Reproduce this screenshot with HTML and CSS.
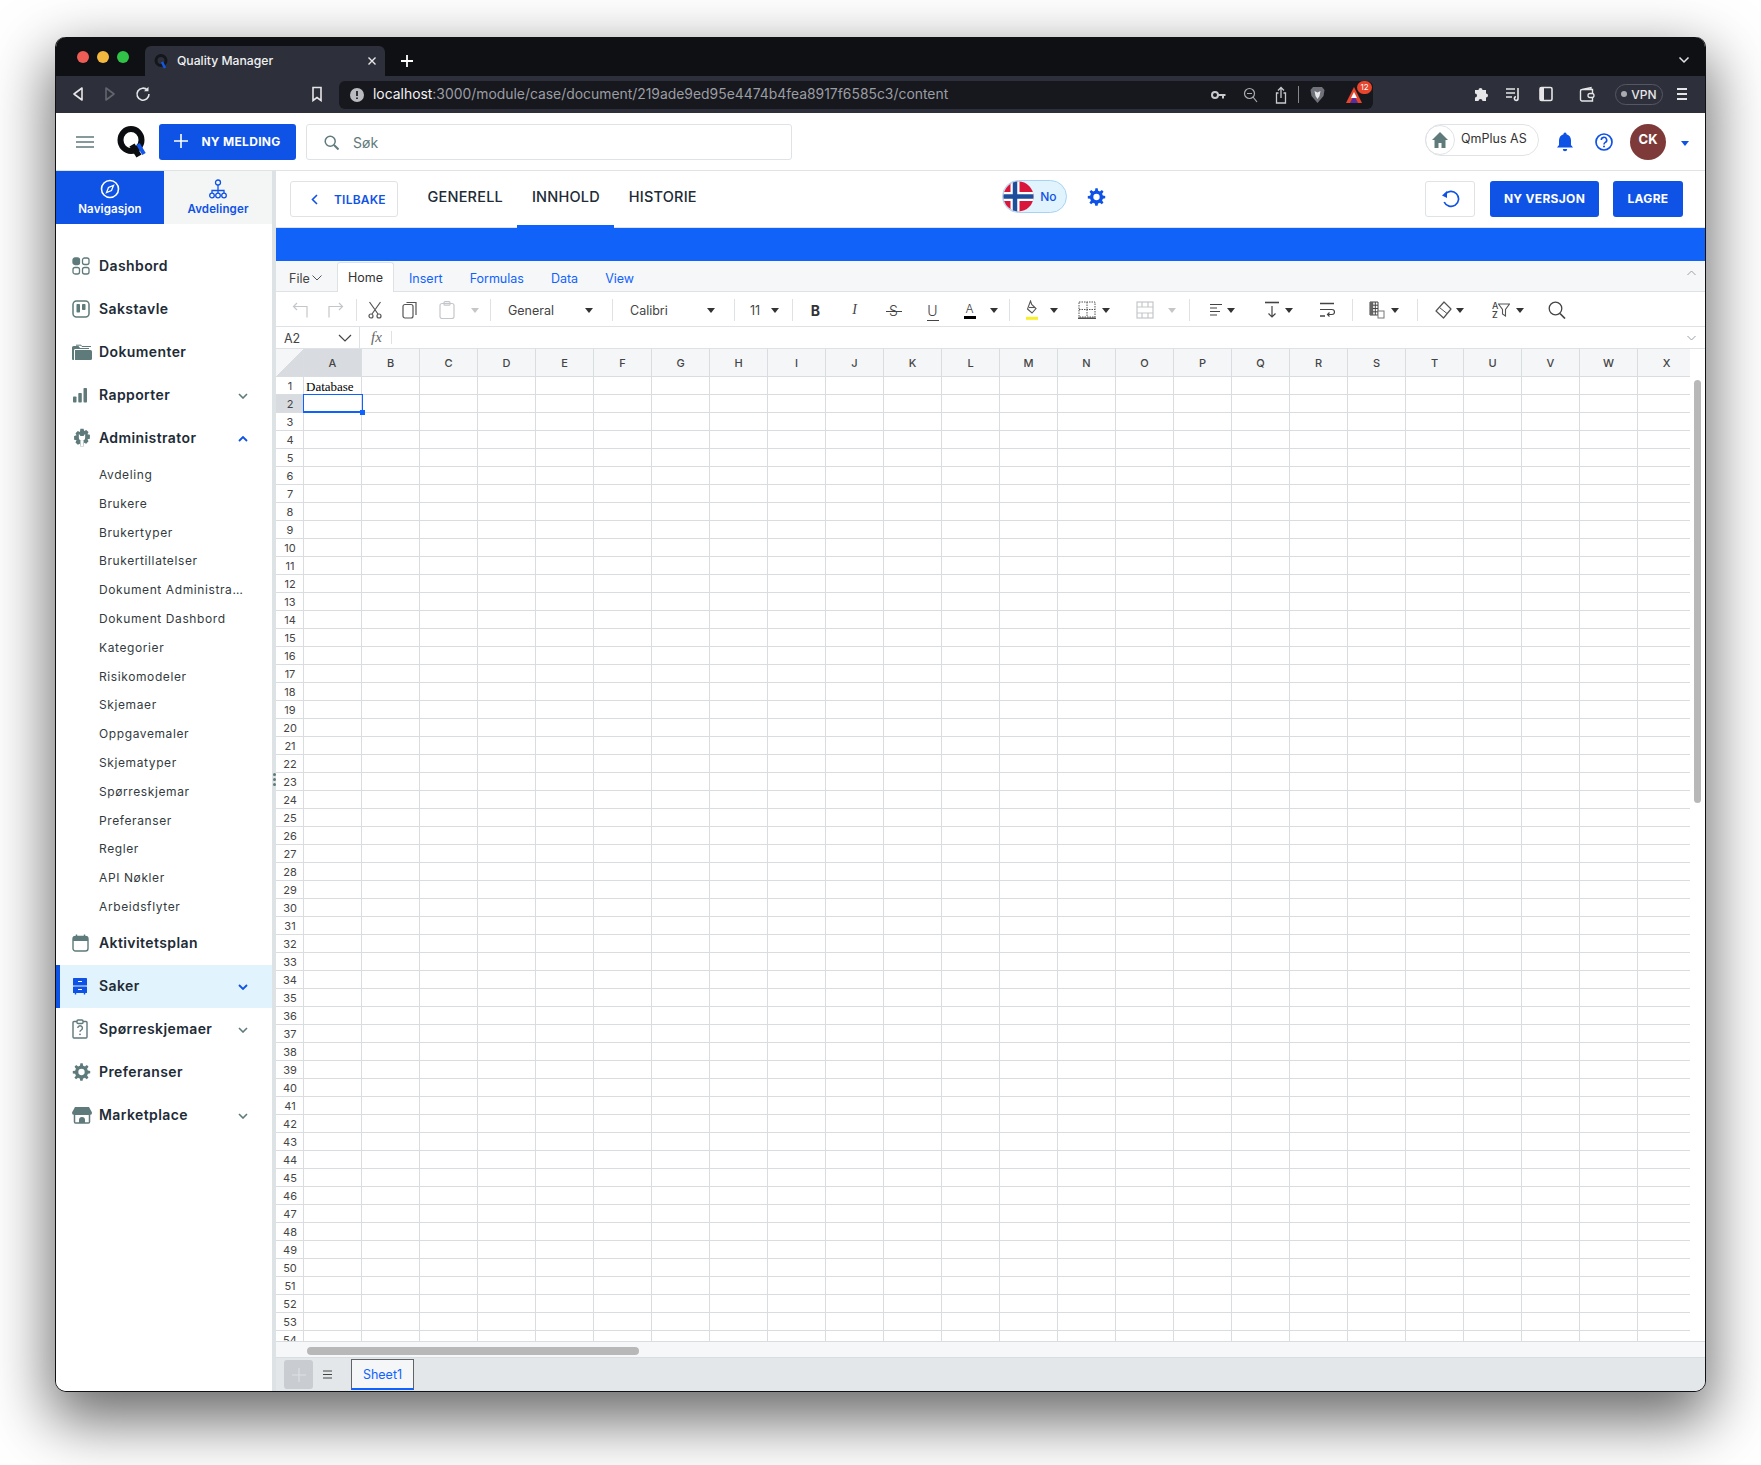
FILE: index.html
```html
<!DOCTYPE html>
<html>
	<head>
		<meta charset="utf-8">
		<title>Quality Manager</title>
		<link rel="stylesheet" href="styles.css">
	</head>
	<body>
		<div class="window">
			<!-- browser tabs -->
			<div class="tabStrip">
				<div class="lights"><span class="light red"></span><span class="light yellow"></span><span class="light green"></span></div>
				<div class="browserTab">
					<svg class="favicon" width="14" height="16" viewBox="0 0 14 16"><circle cx="7" cy="7.5" r="5" fill="none" stroke="#14161c" stroke-width="3"/><path d="M8 9l3 6" stroke="#1257e8" stroke-width="2.5"/></svg>
					<span class="browserTabTitle">Quality Manager</span>
					<svg class="browserTabClose" width="10" height="10" viewBox="0 0 10 10"><path d="M1.5 1.5l7 7M8.5 1.5l-7 7" stroke="#e8e8ea" stroke-width="1.4"/></svg>
				</div>
				<svg class="newTab" width="14" height="14" viewBox="0 0 14 14"><path d="M7 1v12M1 7h12" stroke="#fff" stroke-width="1.8"/></svg>
				<svg class="tabList" width="12" height="8" viewBox="0 0 12 8"><path d="M1.5 1.5L6 6l4.5-4.5" fill="none" stroke="#e4e4e6" stroke-width="1.5"/></svg>
			</div>
			<!-- browser toolbar -->
			<div class="urlRow">
				<div class="navIcons">
					<svg width="14" height="16" viewBox="0 0 14 16"><path d="M11 2L3 8l8 6z" fill="none" stroke="#e6e6e8" stroke-width="1.6" stroke-linejoin="round"/></svg>
					<svg width="14" height="16" viewBox="0 0 14 16"><path d="M3 2l8 6-8 6z" fill="none" stroke="#62656e" stroke-width="1.6" stroke-linejoin="round"/></svg>
					<svg width="16" height="16" viewBox="0 0 16 16"><path d="M12.5 4.2A6 6 0 1 0 14 8" fill="none" stroke="#e6e6e8" stroke-width="1.6"/><path d="M13.5 0.8v4.5H9z" fill="#e6e6e8"/></svg>
				</div>
				<svg class="bookmark" width="12" height="16" viewBox="0 0 12 16"><path d="M2 1.5h8v13L6 11.5l-4 3z" fill="none" stroke="#e6e6e8" stroke-width="1.6"/></svg>
				<div class="urlField">
					<svg width="14" height="14" viewBox="0 0 14 14"><circle cx="7" cy="7" r="7" fill="#b9bbc0"/><path d="M7 3v5M7 9.5v1.6" stroke="#202228" stroke-width="1.8"/></svg>
					<span class="urlText"><b>localhost</b>:3000/module/case/document/219ade9ed95e4474b4fea8917f6585c3/content</span>
					<div class="urlIcons">
						<svg width="15" height="10" viewBox="0 0 15 10"><circle cx="4" cy="5" r="3" fill="none" stroke="#c8c9cc" stroke-width="2"/><path d="M7 4h7.5v2H13v2.500h-2V6H7z" fill="#c8c9cc"/></svg>
						<svg width="15" height="16" viewBox="0 0 15 16"><circle cx="6.500" cy="6.500" r="5" fill="none" stroke="#a9abb0" stroke-width="1.200"/><path d="M4 6.500h5M10 10l4 5" stroke="#a9abb0" stroke-width="1.200"/></svg>
						<svg width="12" height="18" viewBox="0 0 12 18"><path d="M6 12V2M3 4.500L6 1.500l3 3M3.500 7H1.500v10h9V7h-2" fill="none" stroke="#c8c9cc" stroke-width="1.300"/></svg>
						<span class="urlSep"></span>
						<svg width="15" height="18" viewBox="0 0 15 18"><path d="M3 1h9l2.500 3-1 6-6 7-6-7-1-6z" fill="#70727a"/><path d="M4.500 5l3 1.500 3-1.500-1 5-2 3-2-3z" fill="#e8e8ea"/></svg>
						<span class="braveRewards">
							<svg width="18" height="18" viewBox="0 0 18 18"><path d="M9 1l8 16H1z" fill="#e8452c"/><path d="M5 17l4-8 4 8z" fill="#5a2d9c"/><path d="M9 6l3 6H6z" fill="#fff"/></svg>
							<span class="badge">12</span>
						</span>
					</div>
				</div>
				<div class="extIcons">
					<svg width="15" height="16" viewBox="0 0 15 16"><path d="M1 4h3.500a2 2 0 1 1 4 0H12v3.500a2 2 0 1 1 0 4V15H8.500a2 2 0 1 0-4 0H1v-3.500a2 2 0 1 0 0-4z" fill="#e6e6e8"/></svg>
					<svg width="16" height="16" viewBox="0 0 16 16"><path d="M1 3h9M1 7h9M1 11h6" stroke="#e6e6e8" stroke-width="1.600"/><path d="M13 2v10.500a1.800 1.800 0 1 1-2-1.700" fill="none" stroke="#e6e6e8" stroke-width="1.600"/></svg>
					<svg width="14" height="16" viewBox="0 0 14 16"><rect x="1" y="1.500" width="12" height="13" rx="1.500" fill="none" stroke="#e6e6e8" stroke-width="1.600"/><rect x="1" y="1.500" width="4" height="13" fill="#e6e6e8"/></svg>
					<svg width="16" height="16" viewBox="0 0 16 16"><path d="M3 3.500l9-2v2M1.500 5a1.500 1.500 0 0 1 1.500-1.500h10.500V15H3A1.500 1.500 0 0 1 1.500 13.500z" fill="none" stroke="#e6e6e8" stroke-width="1.400"/><rect x="9" y="7.500" width="6" height="4" rx="2" fill="#2d303a" stroke="#e6e6e8" stroke-width="1.300"/></svg>
					<span class="vpnPill"><i class="vpnDot"></i>VPN</span>
					<svg width="12" height="14" viewBox="0 0 12 14"><path d="M1 2h10M1 7h10M1 12h10" stroke="#e6e6e8" stroke-width="1.800"/></svg>
				</div>
			</div>
			<!-- app header -->
			<div class="appHeader">
				<svg class="burger" width="18" height="12" viewBox="0 0 18 12"><path d="M0 1h18M0 6h18M0 11h18" stroke="#5f7a7b" stroke-width="1.600"/></svg>
				<svg class="logo" width="30" height="32" viewBox="0 0 30 32"><ellipse cx="14" cy="14" rx="10.500" ry="11" fill="none" stroke="#0c0d10" stroke-width="6"/><path d="M15 19l7 11" stroke="#0c0d10" stroke-width="6"/><path d="M21 18l6 10" stroke="#1257e8" stroke-width="4"/></svg>
				<button class="btnPrimary newMessage">
					<svg width="14" height="14" viewBox="0 0 14 14"><path d="M7 0v14M0 7h14" stroke="#fff" stroke-width="1.600"/></svg>
					NY MELDING
				</button>
				<div class="search">
					<svg width="15" height="15" viewBox="0 0 15 15"><circle cx="6.200" cy="6.200" r="5" fill="none" stroke="#5f7a7b" stroke-width="1.500"/><path d="M10 10l4.500 4.500" stroke="#5f7a7b" stroke-width="2"/></svg>
					<span>Søk</span>
				</div>
				<div class="orgPill">
					<span class="orgHome"><svg width="18" height="18" viewBox="0 0 18 18"><path d="M9 1L1 9h2.500v8h4v-5h3v5h4V9H17z" fill="#5f7a7b"/></svg></span>
					<span class="orgName">QmPlus AS</span>
				</div>
				<svg class="bell" width="16" height="20" viewBox="0 0 16 20"><path d="M8 0.500a1.500 1.500 0 0 1 1.500 1.700C12.500 3 14 5.500 14 8.500V13l2 2.500H0L2 13V8.500C2 5.500 3.500 3 6.500 2.200A1.500 1.500 0 0 1 8 0.500zM5.800 17h4.400a2.200 2.200 0 0 1-4.400 0z" fill="#0f52e6"/></svg>
				<svg class="help" width="18" height="18" viewBox="0 0 18 18"><circle cx="9" cy="9" r="8" fill="none" stroke="#0f52e6" stroke-width="1.700"/><path d="M6.300 7a2.700 2.700 0 1 1 4 2.400c-.9.500-1.300 1-1.300 2" fill="none" stroke="#0f52e6" stroke-width="1.600"/><circle cx="9" cy="13.500" r="1" fill="#0f52e6"/></svg>
				<span class="avatar">CK</span>
				<span class="avatarCaret"></span>
			</div>
			<div class="appBody">
				<!-- left menu -->
				<div class="sidebar">
					<div class="sideTabs">
						<div class="sideTab sideTabOn">
							<svg width="20" height="20" viewBox="0 0 20 20"><circle cx="10" cy="10" r="8.500" fill="none" stroke="#fff" stroke-width="1.600"/><path d="M13.500 6.500L11.500 11.500 6.500 13.500 8.500 8.500z" fill="none" stroke="#fff" stroke-width="1.300"/></svg>
							Navigasjon
						</div>
						<div class="sideTab">
							<svg width="18" height="20" viewBox="0 0 18 20"><g fill="none" stroke="#0f52e6" stroke-width="1.300"><circle cx="9" cy="3.500" r="2.500"/><circle cx="3" cy="16.500" r="2.300"/><circle cx="9" cy="16.500" r="2.300"/><circle cx="15" cy="16.500" r="2.300"/><path d="M9 6v8M3 14v-2.500h12V14"/></g></svg>
							Avdelinger
						</div>
					</div>
					<div class="nav">
						<div class="navItem">
							<svg class="navIcon" width="18" height="18" viewBox="0 0 18 18"><rect x="1" y="1" width="6.500" height="6.500" rx="2" fill="#5f7a7b" stroke="#5f7a7b" stroke-width="1.300"/><g fill="none" stroke="#5f7a7b" stroke-width="1.300"><rect x="10.500" y="1" width="6.500" height="6.500" rx="2"/><rect x="1" y="10.500" width="6.500" height="6.500" rx="2"/><rect x="10.500" y="10.500" width="6.500" height="6.500" rx="2"/></g></svg>
							<span class="navLabel">Dashbord</span>
						</div>
						<div class="navItem">
							<svg class="navIcon" width="18" height="18" viewBox="0 0 18 18"><rect x="1" y="1" width="16" height="16" rx="3.500" fill="none" stroke="#5f7a7b" stroke-width="1.500"/><rect x="4.500" y="4" width="3.500" height="8.500" rx=".8" fill="#5f7a7b"/><rect x="10" y="4" width="3.500" height="6" rx=".8" fill="#5f7a7b"/></svg>
							<span class="navLabel">Sakstavle</span>
						</div>
						<div class="navItem">
							<svg class="navIcon" width="20" height="16" viewBox="0 0 20 16"><path d="M0 3.500A1.500 1.500 0 0 1 1.500 2h5L8 4h9v1H3a1.500 1.500 0 0 0-1 1.500v9.500H1a1 1 0 0 1-1-1z" fill="#5f7a7b"/><path d="M3 6h15.500a1.500 1.500 0 0 1 1.500 1.500v7a1.500 1.500 0 0 1-1.500 1.500H3z" fill="#5f7a7b"/><path d="M4 1.200h5l1 1.300h9" fill="none" stroke="#5f7a7b" stroke-width="1"/></svg>
							<span class="navLabel">Dokumenter</span>
						</div>
						<div class="navItem">
							<svg class="navIcon" width="16" height="16" viewBox="0 0 16 16"><rect x="1" y="9.500" width="3.500" height="6" rx=".8" fill="#5f7a7b"/><rect x="6.300" y="6" width="3.500" height="9.500" rx=".8" fill="#5f7a7b"/><rect x="11.500" y="1" width="3.500" height="14.500" rx=".8" fill="#5f7a7b"/></svg>
							<span class="navLabel">Rapporter</span>
							<svg class="chev" width="10" height="6" viewBox="0 0 10 6"><path d="M1 1l4 4 4-4" fill="none" stroke="#5f7a7b" stroke-width="1.600"/></svg>
						</div>
						<div class="navItem">
							<svg class="navIcon" width="20" height="19" viewBox="0 0 19 18"><path d="M8 0h3l.5 2.300 2-.9 2.200 2-1 2 2.300.6v3.600l-2.300.6 1 2-2.200 2.200-2-1L11 17H8l-.5-2.600-2 1-2.200-2.200 1-2L2 10.600V7l2.300-.6-1-2 2.200-2 2 .9z" fill="#5f7a7b"/><path d="M6.500 5v3.500a3 3 0 0 0 6 0V5L11 7H8zM8 11.500V17h3v-5.500z" fill="#fff"/></svg>
							<span class="navLabel">Administrator</span>
							<svg class="chev" width="10" height="6" viewBox="0 0 10 6"><path d="M1 5l4-4 4 4" fill="none" stroke="#0f52e6" stroke-width="1.800"/></svg>
						</div>
						<div class="subNav">
							<div class="subItem">Avdeling</div>
							<div class="subItem">Brukere</div>
							<div class="subItem">Brukertyper</div>
							<div class="subItem">Brukertillatelser</div>
							<div class="subItem">Dokument Administrasjon</div>
							<div class="subItem">Dokument Dashbord</div>
							<div class="subItem">Kategorier</div>
							<div class="subItem">Risikomodeler</div>
							<div class="subItem">Skjemaer</div>
							<div class="subItem">Oppgavemaler</div>
							<div class="subItem">Skjematyper</div>
							<div class="subItem">Spørreskjemar</div>
							<div class="subItem">Preferanser</div>
							<div class="subItem">Regler</div>
							<div class="subItem">API Nøkler</div>
							<div class="subItem">Arbeidsflyter</div>
						</div>
						<div class="navItem">
							<svg class="navIcon" width="17" height="18" viewBox="0 0 17 18"><rect x="1" y="2.500" width="15" height="14.500" rx="2.500" fill="none" stroke="#5f7a7b" stroke-width="1.400"/><path d="M1 4.500a2 2 0 0 1 2-2h11a2 2 0 0 1 2 2V7H1z" fill="#5f7a7b"/><path d="M4.500 0.500v3M12.500 0.500v3" stroke="#5f7a7b" stroke-width="1.400"/></svg>
							<span class="navLabel">Aktivitetsplan</span>
						</div>
						<div class="navItem navItemOn">
							<svg class="navIcon" width="16" height="18" viewBox="0 0 16 18"><rect x="1" y="1" width="14" height="7.500" rx=".6" fill="#0f52e6"/><rect x="1" y="9.500" width="14" height="6.500" rx=".6" fill="#0f52e6"/><path d="M6 4.500h4M6 12.500h4" stroke="#fff" stroke-width="1"/><path d="M3.500 16v1.500M12.500 16v1.500" stroke="#0f52e6" stroke-width="1.400"/></svg>
							<span class="navLabel">Saker</span>
							<svg class="chev" width="10" height="6" viewBox="0 0 10 6"><path d="M1 1l4 4 4-4" fill="none" stroke="#0f52e6" stroke-width="1.800"/></svg>
						</div>
						<div class="navItem">
							<svg class="navIcon" width="16" height="20" viewBox="0 0 16 20"><path d="M5 2.500H2A1 1 0 0 0 1 3.500v14.500a1 1 0 0 0 1 1h12a1 1 0 0 0 1-1V3.500a1 1 0 0 0-1-1h-3" fill="none" stroke="#5f7a7b" stroke-width="1.400"/><rect x="5" y="1" width="6" height="3.500" rx="1" fill="none" stroke="#5f7a7b" stroke-width="1.400"/><path d="M5.800 9a2.300 2.300 0 1 1 3.500 2c-.9.500-1.300 1-1.300 1.800" fill="none" stroke="#5f7a7b" stroke-width="1.400"/><circle cx="8" cy="15.300" r=".9" fill="#5f7a7b"/></svg>
							<span class="navLabel">Spørreskjemaer</span>
							<svg class="chev" width="10" height="6" viewBox="0 0 10 6"><path d="M1 1l4 4 4-4" fill="none" stroke="#5f7a7b" stroke-width="1.600"/></svg>
						</div>
						<div class="navItem">
							<svg class="navIcon" width="19" height="19" viewBox="0 0 24 24"><path fill-rule="evenodd" d="M13.500 1l.5 3a8.500 8.500 0 0 1 2.300 1l2.500-1.800 2.100 2.100L19 7.800a8.500 8.500 0 0 1 1 2.300l3 .5v3l-3 .5a8.500 8.500 0 0 1-1 2.300l1.800 2.500-2.100 2.100-2.500-1.800a8.500 8.500 0 0 1-2.300 1l-.5 3h-3l-.5-3a8.500 8.500 0 0 1-2.300-1l-2.500 1.800-2.100-2.100L5 16.600a8.500 8.500 0 0 1-1-2.300l-3-.5v-3l3-.5a8.500 8.500 0 0 1 1-2.300L3.200 5.400l2.100-2.100L7.800 5a8.500 8.500 0 0 1 2.300-1l.5-3zM12 8a4 4 0 1 0 0 8 4 4 0 0 0 0-8z" fill="#5f7a7b"/></svg>
							<span class="navLabel">Preferanser</span>
						</div>
						<div class="navItem">
							<svg class="navIcon" width="20" height="18" viewBox="0 0 20 18"><path d="M3 1h14l3 5.500a2.500 2.500 0 0 1-2.500 2.500H2.500A2.500 2.500 0 0 1 0 6.500z" fill="#5f7a7b"/><path d="M2.500 9v7a1 1 0 0 0 1 1h13a1 1 0 0 0 1-1V9" fill="none" stroke="#5f7a7b" stroke-width="1.500"/><path d="M7 17v-3a3 3 0 0 1 6 0v3z" fill="#5f7a7b"/></svg>
							<span class="navLabel">Marketplace</span>
							<svg class="chev" width="10" height="6" viewBox="0 0 10 6"><path d="M1 1l4 4 4-4" fill="none" stroke="#5f7a7b" stroke-width="1.600"/></svg>
						</div>
					</div>
				</div>
				<div class="divider"><span class="grip"><i></i><i></i><i></i></span></div>
				<!-- document -->
				<div class="main">
					<div class="pageTabs">
						<button class="btnBack">
							<svg width="7" height="11" viewBox="0 0 7 11"><path d="M6 1L1.500 5.500 6 10" fill="none" stroke="#0f52e6" stroke-width="1.600"/></svg>
							TILBAKE
						</button>
						<div class="pageTab">GENERELL</div>
						<div class="pageTab pageTabOn">INNHOLD</div>
						<div class="pageTab">HISTORIE</div>
						<div class="langArea">
							<div class="langPill">
								<svg width="31" height="31" viewBox="0 0 31 31"><defs><clipPath id="flagClip"><circle cx="15.500" cy="15.500" r="15"/></clipPath></defs><g clip-path="url(#flagClip)"><rect width="31" height="31" fill="#d9173d"/><path d="M12 0v31M0 15.500h31" stroke="#fff" stroke-width="9"/><path d="M12 0v31M0 15.500h31" stroke="#1c4e9c" stroke-width="4.500"/></g></svg>
								<span>No</span>
							</div>
							<svg class="langGear" width="19" height="20" viewBox="0 0 24 24"><path fill-rule="evenodd" d="M13.500 1l.5 3a8.500 8.500 0 0 1 2.300 1l2.500-1.800 2.100 2.100L19 7.800a8.500 8.500 0 0 1 1 2.300l3 .5v3l-3 .5a8.500 8.500 0 0 1-1 2.300l1.800 2.500-2.100 2.100-2.500-1.800a8.500 8.500 0 0 1-2.300 1l-.5 3h-3l-.5-3a8.500 8.500 0 0 1-2.300-1l-2.500 1.800-2.100-2.100L5 16.600a8.500 8.500 0 0 1-1-2.300l-3-.5v-3l3-.5a8.500 8.500 0 0 1 1-2.300L3.200 5.400l2.100-2.100L7.800 5a8.500 8.500 0 0 1 2.300-1l.5-3zM12 8a4 4 0 1 0 0 8 4 4 0 0 0 0-8z" fill="#0f52e6"/></svg>
						</div>
						<div class="pageActions">
							<button class="btnIcon"><svg width="20" height="18" viewBox="0 0 20 18"><path d="M5 4.500A7.500 7.500 0 1 1 4.200 12" fill="none" stroke="#0f52e6" stroke-width="1.700"/><path d="M2 5.500L7 1v7z" fill="#0f52e6"/></svg></button>
							<button class="btnPrimary btnVersion">NY VERSJON</button>
							<button class="btnPrimary btnSave">LAGRE</button>
						</div>
					</div>
					<div class="blueBar"></div>
					<div class="ribbonTabs">
						<span class="fileMenu">File<svg width="10" height="6" viewBox="0 0 10 6"><path d="M.5.500L5 5 9.500.500" fill="none" stroke="#555" stroke-width="1"/></svg></span>
						<span class="ribbonTab ribbonTabOn">Home</span>
						<span class="ribbonTab">Insert</span>
						<span class="ribbonTab">Formulas</span>
						<span class="ribbonTab">Data</span>
						<span class="ribbonTab">View</span>
						<svg class="ribbonCollapse" width="9" height="6" viewBox="0 0 9 6"><path d="M.5 5L4.500 1l4 4" fill="none" stroke="#9aa0a6" stroke-width="1"/></svg>
					</div>
					<div class="toolbar">
						<div class="toolGroup tg1">
							<svg class="tool" width="18" height="18" viewBox="0 0 18 18"><path d="M5 2L1.500 5.500 5 9M1.500 5.500H15v11" fill="none" stroke="#c4c7ca" stroke-width="1.200"/></svg>
							<svg class="tool ml16" width="18" height="18" viewBox="0 0 18 18"><path d="M13 2l3.500 3.500L13 9M16.500 5.500H3v11" fill="none" stroke="#c4c7ca" stroke-width="1.200"/></svg>
						</div>
						<div class="toolGroup tg2">
							<svg class="tool" width="14" height="18" viewBox="0 0 14 18"><g fill="none" stroke="#555" stroke-width="1.200"><path d="M1.500 1L10 13M12.500 1L4 13"/><circle cx="3" cy="15" r="2"/><circle cx="11" cy="15" r="2"/></g></svg>
							<svg class="tool ml20" width="15" height="18" viewBox="0 0 15 18"><g fill="none" stroke="#555" stroke-width="1.200"><rect x="1" y="3.500" width="10" height="13.500" rx="2"/><path d="M4.500 1.500H14v12.500"/></g></svg>
							<svg class="tool ml22" width="16" height="18" viewBox="0 0 16 18"><g fill="none" stroke="#c4c7ca" stroke-width="1.200"><rect x="1" y="2.500" width="14" height="15" rx="2"/><rect x="5" y=".7" width="6" height="3.500" rx="1"/></g></svg>
							<i class="caret caretOff ml16"></i>
						</div>
						<div class="toolGroup tg3"><span class="toolText">General</span><i class="caret"></i></div>
						<div class="toolGroup tg3"><span class="toolText">Calibri</span><i class="caret"></i></div>
						<div class="toolGroup tg4"><span class="toolText">11</span><i class="caret"></i></div>
						<div class="toolGroup tg5">
							<span class="fmt fmtBold">B</span>
							<span class="fmt fmtItalic">I</span>
							<span class="fmt fmtStrike">S</span>
							<span class="fmt fmtUnder">U</span>
							<span class="fmt fmtColor">A</span>
							<i class="caret ml14"></i>
						</div>
						<div class="toolGroup tg6">
							<svg class="tool" width="16" height="20" viewBox="0 0 16 20"><g fill="none" stroke="#555" stroke-width="1.100"><path d="M6.500 1l1.200 3.500L12 8.500 8 13 3.500 9z"/><path d="M5 7.500h6"/></g><rect x="2" y="16.800" width="12" height="3" fill="#f8ef2a"/></svg>
							<i class="caret ml10"></i>
							<svg class="tool ml20" width="18" height="18" viewBox="0 0 18 18"><path d="M1 1h16v15H1zM9 1v15M1 8.500h16" fill="none" stroke="#555" stroke-width="1" stroke-dasharray="1.500 1"/><path d="M0 17.200h18" stroke="#333" stroke-width="1.300"/></svg>
							<i class="caret ml6"></i>
							<svg class="tool ml26" width="18" height="18" viewBox="0 0 18 18"><g fill="none" stroke="#c4c7ca" stroke-width="1.200"><rect x="1" y="1" width="16" height="16"/><path d="M1 6h16M1 12h16M6 1v5M12 1v5M6 12v5M12 12v5"/></g></svg>
							<i class="caret caretOff ml14"></i>
						</div>
						<div class="toolGroup tg7">
							<svg class="tool" width="14" height="14" viewBox="0 0 14 14"><path d="M1 1.500h12M1 5h7M1 8.500h10M1 12h7" stroke="#444" stroke-width="1.200"/></svg>
							<i class="caret ml4"></i>
							<svg class="tool ml30" width="14" height="18" viewBox="0 0 14 18"><path d="M0 1.500h14" stroke="#444" stroke-width="1.600"/><path d="M7 5v11M3.500 12.500L7 16l3.500-3.500" fill="none" stroke="#444" stroke-width="1.200"/></svg>
							<i class="caret ml6"></i>
							<svg class="tool ml26" width="16" height="16" viewBox="0 0 16 16"><path d="M1 1.500h14M1 14h5" stroke="#444" stroke-width="1.400"/><path d="M1 7.500h12a2.500 2.500 0 0 1 0 5H8.500M10.500 10.500l-2 2 2 2" fill="none" stroke="#444" stroke-width="1.200"/></svg>
						</div>
						<div class="toolGroup tg8">
							<svg class="tool" width="16" height="18" viewBox="0 0 16 18"><path d="M1 1h8v13H1zM1 4.200h8M1 7.500h8M1 10.800h8M3.700 1v13M6.300 1v13" fill="none" stroke="#444" stroke-width="1"/><rect x="1" y="1" width="2.700" height="13" fill="#666"/><rect x="9" y="10" width="6" height="7" fill="#fff" stroke="#777" stroke-width="1"/></svg>
							<i class="caret ml6"></i>
						</div>
						<div class="toolGroup tg9">
							<svg class="tool" width="17" height="18" viewBox="0 0 17 18"><path d="M9 1l7 7-7.500 9L1 10z" fill="none" stroke="#555" stroke-width="1.200" stroke-linejoin="round"/><path d="M4.500 6.500l7.500 6" stroke="#555" stroke-width="1"/></svg>
							<i class="caret ml4"></i>
							<span class="sortIcon ml28">
								<span class="sortAz">A<br>Z</span>
								<svg width="12" height="14" viewBox="0 0 12 14"><path d="M.5 1h11L7.500 6.500V13l-3-2V6.500z" fill="none" stroke="#555" stroke-width="1.100"/></svg>
							</span>
							<i class="caret ml6"></i>
							<svg class="tool ml24" width="18" height="18" viewBox="0 0 18 18"><circle cx="7.500" cy="7.500" r="6.300" fill="none" stroke="#444" stroke-width="1.300"/><path d="M12 12.500l5 5" stroke="#444" stroke-width="1.700"/></svg>
						</div>
					</div>
					<div class="formulaBar">
						<div class="nameBox">
							<span>A2</span>
							<svg width="14" height="8" viewBox="0 0 14 8"><path d="M1 1l6 6 6-6" fill="none" stroke="#444" stroke-width="1.200"/></svg>
						</div>
						<span class="fx">fx</span>
						<span class="fxSep"></span>
						<svg class="formulaExpand" width="9" height="6" viewBox="0 0 9 6"><path d="M.5 1l4 4 4-4" fill="none" stroke="#9aa0a6" stroke-width="1"/></svg>
					</div>
					<div class="sheet">
						<div class="sheetClip">
							<div class="colRow">
								<div class="corner"></div>
								<div class="colHead colHeadOn">A</div><div class="colHead">B</div><div class="colHead">C</div><div class="colHead">D</div><div class="colHead">E</div><div class="colHead">F</div><div class="colHead">G</div><div class="colHead">H</div><div class="colHead">I</div><div class="colHead">J</div><div class="colHead">K</div><div class="colHead">L</div><div class="colHead">M</div><div class="colHead">N</div><div class="colHead">O</div><div class="colHead">P</div><div class="colHead">Q</div><div class="colHead">R</div><div class="colHead">S</div><div class="colHead">T</div><div class="colHead">U</div><div class="colHead">V</div><div class="colHead">W</div><div class="colHead">X</div>
							</div>
							<div class="gridRow">
								<div class="rowHeads">
									<div class="rowHead">1</div><div class="rowHead rowHeadOn">2</div><div class="rowHead">3</div><div class="rowHead">4</div><div class="rowHead">5</div><div class="rowHead">6</div><div class="rowHead">7</div><div class="rowHead">8</div><div class="rowHead">9</div><div class="rowHead">10</div>
									<div class="rowHead">11</div><div class="rowHead">12</div><div class="rowHead">13</div><div class="rowHead">14</div><div class="rowHead">15</div><div class="rowHead">16</div><div class="rowHead">17</div><div class="rowHead">18</div><div class="rowHead">19</div><div class="rowHead">20</div>
									<div class="rowHead">21</div><div class="rowHead">22</div><div class="rowHead">23</div><div class="rowHead">24</div><div class="rowHead">25</div><div class="rowHead">26</div><div class="rowHead">27</div><div class="rowHead">28</div><div class="rowHead">29</div><div class="rowHead">30</div>
									<div class="rowHead">31</div><div class="rowHead">32</div><div class="rowHead">33</div><div class="rowHead">34</div><div class="rowHead">35</div><div class="rowHead">36</div><div class="rowHead">37</div><div class="rowHead">38</div><div class="rowHead">39</div><div class="rowHead">40</div>
									<div class="rowHead">41</div><div class="rowHead">42</div><div class="rowHead">43</div><div class="rowHead">44</div><div class="rowHead">45</div><div class="rowHead">46</div><div class="rowHead">47</div><div class="rowHead">48</div><div class="rowHead">49</div><div class="rowHead">50</div>
									<div class="rowHead">51</div><div class="rowHead">52</div><div class="rowHead">53</div><div class="rowHead">54</div>
								</div>
								<div class="cells">
									<div class="cell">Database</div>
									<div class="cellSelected"><i class="fillHandle"></i></div>
								</div>
							</div>
						</div>
						<div class="vScroll"></div>
					</div>
					<div class="hScrollRow"><div class="hThumb"></div></div>
					<div class="sheetTabs">
						<span class="addSheet"><svg width="14" height="14" viewBox="0 0 14 14"><path d="M7 0v14M0 7h14" stroke="#dde0e3" stroke-width="1.200"/></svg></span>
						<svg class="sheetMenu" width="9" height="9" viewBox="0 0 9 9"><path d="M0 1h9M0 4.500h9M0 8h9" stroke="#444" stroke-width="1"/></svg>
						<span class="sheetTab">Sheet1</span>
					</div>
				</div>
			</div>
		</div>
	</body>
</html>
```

FILE: styles.css
```css
html, body { margin: 0; padding: 0; background: #fff; }
body { width: 1761px; height: 1465px; overflow: hidden; font-family: "Inter", "Liberation Sans", sans-serif; color: #212b36; }
svg { display: block; flex: none; }
button { font-family: inherit; cursor: pointer; }

.window { width: 1649px; height: 1354px; margin: 37px 0 0 56px; border-radius: 10px; overflow: hidden; display: flex; flex-direction: column; background: #fff; box-shadow: 1px 0 #101114, -1px 0 #101114, 0 1px #101114, 0 24px 60px 6px rgba(0,0,0,.58); }

/* browser chrome */
.tabStrip { height: 39px; flex: none; background: #0f1014; display: flex; align-items: flex-end; position: relative; }
.lights { display: flex; gap: 8px; width: 89px; padding: 0 0 13px 21px; box-sizing: border-box; align-self: flex-end; }
.light { width: 12px; height: 12px; border-radius: 50%; }
.red { background: #ed5c55; }
.yellow { background: #f4b83f; }
.green { background: #30c348; }
.browserTab { width: 240px; height: 30px; background: #2d303a; border-radius: 6px 6px 0 0; display: flex; align-items: center; padding: 0 8px 0 9px; box-sizing: border-box; }
.browserTabTitle { margin-left: 9px; padding-bottom: 2px; font-size: 12.200px; font-weight: 500; color: #f0f0f2; flex: 1; }
.newTab { margin: 0 0 8px 15px; }
.tabList { margin: 0 0 12px auto; margin-right: 15px; }

.urlRow { height: 37px; flex: none; background: #2d303a; display: flex; align-items: center; padding-bottom: 1px; box-sizing: border-box; }
.navIcons { display: flex; align-items: center; gap: 18px; margin-left: 15px; width: 240px; }
.bookmark { margin-left: 0; }
.urlField { width: 1034px; height: 28px; margin-left: 16px; margin-top: 1px; background: #17181d; border-radius: 6px; display: flex; align-items: center; padding-left: 11px; box-sizing: border-box; }
.urlText { margin-left: 9px; padding-bottom: 2px; font-size: 13.900px; color: #9b9da4; white-space: nowrap; }
.urlText b { font-weight: 400; color: #f2f2f4; }
.urlIcons { display: flex; align-items: center; margin-left: auto; gap: 17px; padding-right: 10px; }
.urlSep { width: 1px; height: 17px; background: #85878d; margin: 0 -6px 0 -6px; }
.braveRewards { position: relative; display: block; margin-left: 3px; }
.badge { position: absolute; right: -9px; top: -5px; min-width: 13px; height: 13px; padding: 0 1px; background: #e8452c; border-radius: 7px; color: #fff; font-size: 8px; line-height: 13px; text-align: center; }
.extIcons { display: flex; align-items: center; margin-left: 101px; gap: 0; }
.extIcons svg:nth-child(2) { margin-left: 16px; }
.extIcons svg:nth-child(3) { margin-left: 18px; }
.extIcons svg:nth-child(4) { margin-left: 26px; }
.extIcons svg:nth-child(6) { margin-left: 13px; }
.vpnPill { margin-left: 20px; width: 48px; height: 21px; border: 1px solid #555862; border-radius: 11px; box-sizing: border-box; display: flex; align-items: center; justify-content: center; gap: 4px; font-size: 12px; font-weight: 500; color: #e6e6e8; }
.vpnDot { width: 6px; height: 6px; border-radius: 50%; background: #a9abb0; }

/* app header */
.appHeader { height: 58px; flex: none; box-sizing: border-box; border-bottom: 1px solid #dfe3e6; display: flex; align-items: center; padding-top: 1px; }
.burger { margin-left: 20px; }
.logo { margin-left: 23px; }
.btnPrimary { background: #0f52e6; color: #fff; border: 0; border-radius: 3px; font-weight: 700; font-size: 12px; letter-spacing: .3px; display: flex; align-items: center; justify-content: center; height: 36px; padding: 0 0 2px; }
.newMessage { width: 137px; margin-left: 12px; gap: 13px; }
.search { width: 486px; height: 36px; margin-left: 10px; border: 1px solid #dfe3e6; border-radius: 3px; box-sizing: border-box; display: flex; align-items: center; padding-left: 17px; gap: 14px; font-size: 14px; color: #5f7a7b; }
.orgPill { margin-left: auto; width: 114px; height: 32px; margin-top: -4px; border: 1px solid #dfe3e6; border-radius: 16px; box-sizing: border-box; display: flex; align-items: center; font-size: 12.500px; color: #333; }
.orgHome { width: 30px; height: 30px; border: 1px solid #dfe3e6; border-radius: 50%; box-sizing: border-box; display: flex; align-items: center; justify-content: center; margin-left: -1px; }
.orgName { margin-left: 6px; margin-top: -3px; }
.bell { margin-left: 18px; }
.help { margin-left: 22px; }
.avatar { margin-left: 17px; width: 36px; height: 36px; border-radius: 50%; background: #7d3a38; color: #fff; font-size: 13px; font-weight: 700; display: flex; align-items: center; justify-content: center; padding-bottom: 6px; box-sizing: border-box; }
.avatarCaret { margin: 2px 16px 0 15px; width: 0; height: 0; border-left: 4.5px solid transparent; border-right: 4.5px solid transparent; border-top: 5px solid #0f52e6; }

.appBody { flex: 1; display: flex; min-height: 0; }

/* left menu */
.sidebar { width: 216px; flex: none; background: #fff; }
.sideTabs { display: flex; height: 53px; background: #f4f6f6; }
.sideTab { width: 108px; display: flex; flex-direction: column; align-items: center; gap: 3px; padding-top: 8px; box-sizing: border-box; font-size: 11.500px; font-weight: 600; letter-spacing: .15px; color: #0f52e6; }
.sideTabOn { background: #0f52e6; color: #fff; }
.nav { padding-top: 20px; }
.navItem { height: 43px; display: flex; align-items: center; position: relative; box-sizing: border-box; }
.navIcon { position: absolute; left: 16px; top: 50%; transform: translateY(-50%); }
.navLabel { margin-left: 43px; font-size: 14px; font-weight: 600; letter-spacing: .4px; color: #212b36; margin-top: -1px; }
.chev { margin-left: auto; margin-right: 24px; margin-top: 2px; }
.navItemOn { background: #e1f3fc; border-left: 4px solid #0f52e6; }
.navItemOn .navIcon { left: 12px; }
.navItemOn .navLabel { margin-left: 39px; }
.subNav { margin-top: 2px; }
.subItem { height: 28.800px; line-height: 28px; padding-left: 43px; width: 187px; box-sizing: border-box; font-size: 12px; letter-spacing: .6px; color: #333a40; white-space: nowrap; overflow: hidden; text-overflow: ellipsis; }

.divider { width: 4px; flex: none; background: #dde3e4; display: flex; align-items: center; justify-content: center; padding-bottom: 4px; box-sizing: border-box; }
.grip { display: flex; flex-direction: column; gap: 2px; margin-top: 0; }
.grip i { display: block; width: 3px; height: 3px; border-radius: 50%; background: #5f7a7b; }

/* document */
.main { flex: 1; min-width: 0; display: flex; flex-direction: column; }
.pageTabs { height: 57px; flex: none; box-sizing: border-box; display: flex; align-items: flex-start; border-bottom: 1px solid #dfe3e6; }
.btnBack { margin: 10px 0 0 14px; width: 108px; height: 36px; background: #fff; border: 1px solid #dfe3e6; border-radius: 3px; display: flex; align-items: center; padding: 0 0 0 20px; gap: 16px; color: #0f52e6; font-size: 12px; font-weight: 600; letter-spacing: .2px; }
.pageTab { height: 57px; padding: 17px 14.500px 0; box-sizing: border-box; font-size: 14.500px; font-weight: 500; letter-spacing: .2px; color: #212b36; }
.btnBack + .pageTab { margin-left: 15px; }
.pageTabOn { border-bottom: 3px solid #0f62fe; }
.langArea { display: flex; align-items: center; margin: 9px 0 0 291px; }
.langPill { width: 65px; height: 33px; background: #e1f3fc; border: 1px solid #a6d3f5; border-radius: 17px; box-sizing: border-box; display: flex; align-items: center; gap: 6px; font-size: 12px; font-weight: 500; color: #0f52e6; }
.langGear { margin-left: 20px; }
.pageActions { margin: 10px 22px 0 auto; display: flex; gap: 15px; }
.btnIcon { width: 50px; height: 36px; background: #fff; border: 1px solid #dfe3e6; border-radius: 3px; display: flex; align-items: center; justify-content: center; padding: 0; }
.btnVersion { width: 109px; }
.btnSave { width: 70px; margin-left: -1px; }
.blueBar { height: 33px; flex: none; background: #1062f8; }

/* spreadsheet */
.ribbonTabs { height: 31px; flex: none; box-sizing: border-box; background: #f6f7f9; border-bottom: 1px solid #dfe2e5; display: flex; align-items: flex-end; position: relative; font-size: 12.500px; }
.fileMenu { margin-left: 13px; height: 30px; padding-top: 4px; box-sizing: border-box; display: flex; align-items: center; gap: 2px; color: #444; width: 48px; }
.ribbonTab { height: 30px; padding-top: 4px; box-sizing: border-box; display: flex; align-items: center; color: #0f62fe; margin-right: 27px; }
.ribbonTabOn { width: 57px; height: 30px; margin-bottom: -1px; justify-content: center; background: #fff; border: 1px solid #dfe2e5; border-bottom: 0; border-radius: 3px 3px 0 0; color: #333; margin-right: 15px; padding-top: 0; padding-bottom: 1px; }
.ribbonCollapse { position: absolute; right: 9px; top: 9px; }
.toolbar { height: 35px; flex: none; box-sizing: border-box; border-bottom: 1px solid #dfe2e5; padding-top: 2px; display: flex; align-items: center; font-size: 12.500px; color: #444; }
.toolGroup { height: 22px; display: flex; align-items: center; box-sizing: border-box; border-right: 1px solid #dfe2e5; flex: none; }
.tg1 { width: 81px; padding-left: 16px; }
.tg2 { width: 134px; padding-left: 11px; }
.tg3 { width: 122px; padding-left: 17px; }
.tg3 .caret { margin-left: auto; margin-right: 19px; }
.tg4 { width: 58px; padding-left: 15px; }
.tg4 .caret { margin-left: 11px; }
.tg5 { width: 217px; padding-left: 13.500px; }
.tg6 { width: 180px; padding-left: 14px; }
.tg7 { width: 163px; padding-left: 19px; }
.tg8 { width: 65px; padding-left: 16px; }
.tg9 { border-right: 0; padding-left: 17px; }
.ml4 { margin-left: 4px; }
.ml6 { margin-left: 6px; }
.ml10 { margin-left: 10px; }
.ml14 { margin-left: 14px; }
.ml16 { margin-left: 16px; }
.ml20 { margin-left: 20px; }
.ml22 { margin-left: 22px; }
.ml24 { margin-left: 24px; }
.ml26 { margin-left: 26px; }
.ml28 { margin-left: 28px; }
.ml30 { margin-left: 30px; }
.caret { display: block; flex: none; width: 0; height: 0; border-left: 4px solid transparent; border-right: 4px solid transparent; border-top: 5px solid #333; }
.caretOff { border-top-color: #c4c7ca; }
.fmt { display: block; width: 18px; margin-right: 21px; text-align: center; font-size: 14px; color: #444; flex: none; position: relative; }
.fmtBold { font-weight: 700; color: #333; }
.fmtItalic { font-family: "Liberation Serif", serif; font-style: italic; }
.fmtStrike { font-weight: 300; }
.fmtStrike:after { content: ""; position: absolute; left: 1px; right: 1px; top: 9px; height: 1px; background: #444; }
.fmtUnder { font-weight: 300; }
.fmtUnder:after { content: ""; position: absolute; left: 3px; right: 3px; bottom: -2px; height: 1px; background: #444; }
.fmtColor { border-bottom: 3px solid #000; line-height: 15px; font-size: 12px; font-weight: 300; margin-right: 0; width: 12px; margin-left: 1px; }
.sortIcon { display: flex; align-items: center; gap: 0; }
.sortAz { font-size: 9px; line-height: 9px; color: #444; font-weight: 500; }
.formulaBar { height: 22px; flex: none; box-sizing: border-box; border-bottom: 1px solid #dfe2e5; display: flex; align-items: center; position: relative; font-size: 12.500px; color: #444; }
.nameBox { width: 84px; height: 21px; box-sizing: border-box; border-right: 1px solid #dfe2e5; display: flex; align-items: center; justify-content: space-between; padding: 1px 7px 0 8px; }
.fx { font-family: "Liberation Serif", serif; font-style: italic; font-size: 15px; margin-left: 11px; color: #666; }
.fxSep { width: 1px; height: 13px; background: #dfe2e5; margin-left: 9px; }
.formulaExpand { position: absolute; right: 9px; top: 8px; }

.sheet { flex: 1; min-height: 0; position: relative; }
.sheetClip { width: 1414px; height: 100%; overflow: hidden; display: flex; flex-direction: column; }
.colRow { display: flex; height: 28px; flex: none; background: #f5f6f8; }
.corner { width: 28px; flex: none; box-sizing: border-box; border-right: 1px solid #dadde0; border-bottom: 1px solid #dadde0; background: linear-gradient(to bottom right, #f5f6f8 50%, #d8dce0 50%); }
.colHead { width: 58px; flex: none; box-sizing: border-box; border-right: 1px solid #dadde0; border-bottom: 1px solid #dadde0; display: flex; align-items: center; justify-content: center; font-size: 11px; font-weight: 500; color: #444; }
.colHeadOn { background: #d8dce0; }
.gridRow { display: flex; flex: 1; min-height: 0; }
.rowHeads { width: 28px; flex: none; }
.rowHead { height: 18px; box-sizing: border-box; border-right: 1px solid #dadde0; border-bottom: 1px solid #dadde0; background: #fff; text-align: center; font-size: 11px; line-height: 19px; color: #444; padding-left: 1px; }
.rowHeadOn { background: #d8dce0; }
.cells { flex: none; width: 1392px; height: 972px; display: grid; grid-template-columns: repeat(24, 58px); grid-auto-rows: 18px; background-image: linear-gradient(to right, transparent 57px, #dadde0 57px), linear-gradient(to bottom, transparent 17px, #dadde0 17px); background-size: 58px 18px; }
.cell { font-family: "Liberation Serif", serif; font-size: 13px; line-height: 19px; color: #000; padding-left: 2px; white-space: nowrap; }
.cellSelected { position: relative; margin: -1px -1px 0 -1px; border: 1px solid #0f62fe; grid-column: 1; grid-row: 2; }
.cellSelected { border-width: 1px 1px 2px 1px; }
.fillHandle { position: absolute; right: -3px; bottom: -4px; width: 5px; height: 5px; background: #0f62fe; }
.vScroll { position: absolute; right: 4px; top: 31px; width: 7px; height: 423px; background: #b8b8b8; border-radius: 4px; }
.hScrollRow { height: 17px; flex: none; box-sizing: border-box; background: #f6f7f9; border-top: 1px solid #dadde0; border-bottom: 1px solid #dadde0; padding: 5px 0 0 31px; }
.hThumb { width: 332px; height: 8px; background: #b8b8b8; border-radius: 4px; }
.sheetTabs { height: 33px; flex: none; background: #e4e7ea; display: flex; align-items: flex-start; }
.addSheet { margin: 2px 0 0 8px; width: 29px; height: 29px; background: #c9cdd1; border-radius: 3px; display: flex; align-items: center; justify-content: center; }
.sheetMenu { margin: 12px 0 0 10px; }
.sheetTab { margin: 1px 0 0 19px; width: 63px; height: 31px; box-sizing: border-box; background: #f5f6f8; border: 1px solid #5f6468; border-bottom: 2px solid #0f62fe; display: flex; align-items: center; justify-content: center; font-size: 12.500px; color: #0f62fe; }
```
